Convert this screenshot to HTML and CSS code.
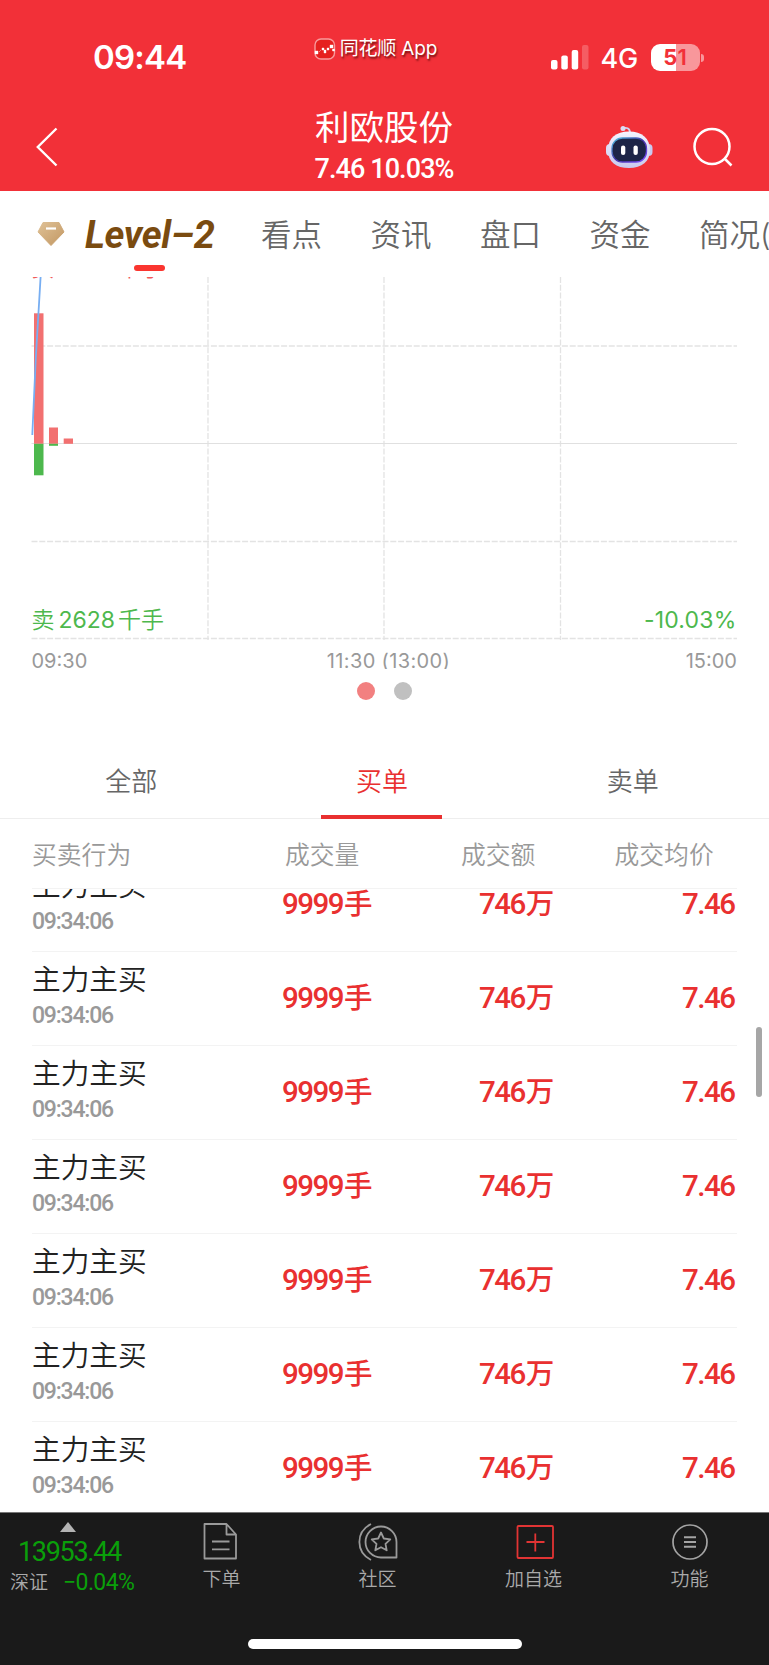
FILE: index.html
```
<!DOCTYPE html>
<html lang="zh-CN">
<head>
  <meta charset="UTF-8">
  <title>利欧股份</title>
  <link rel="stylesheet" href="styles.css">
</head>
<body>
  <header class="header">
    <div class="status">
      <span class="clock">09:44</span>
      <div class="app-mark">
        <svg width="22" height="22" viewBox="0 0 22 22">
          <rect x="1" y="1" width="19.5" height="20" rx="6" fill="#e6201f" stroke="#f89a9c" stroke-width="1.4"/>
          <path d="M1 13h3v3H1zM5 14l2-2M8 10h2v2H8zM10 12h2v3h-2zM13 10h2v2h-2zM16 7h3v3h-3zM18.500 11h2v2h-2z" fill="#fff" stroke="#fff" stroke-width=".4"/>
        </svg>
        <span>同花顺 App</span>
      </div>
      <div class="phone">
        <svg class="signal" width="38" height="25" viewBox="0 0 38 25" fill="#fff">
          <rect x="0" y="15" width="6.500" height="9.500" rx="2"/>
          <rect x="10.300" y="10.500" width="6.500" height="14" rx="2"/>
          <rect x="20.700" y="5" width="6.500" height="19.500" rx="2"/>
          <rect x="31" y="0" width="6.500" height="24.500" rx="2" opacity=".22"/>
        </svg>
        <span class="network">4G</span>
        <div class="battery">5<b>1</b></div>
        <i class="nub"></i>
      </div>
    </div>
    <div class="nav">
      <svg class="back" width="22" height="40" viewBox="0 0 22 40" fill="none" stroke="#fff" stroke-width="2.400">
        <path d="M20.500 1.500L1.800 20l18.700 18.500"/>
      </svg>
      <div class="stock">
        <h1>利欧股份</h1>
        <p class="quote">7.46 10.03%</p>
      </div>
      <div class="tools">
        <svg width="48" height="44" viewBox="0 0 48 44">
          <defs>
            <linearGradient id="shell" x1="0" y1="0" x2="0" y2="1">
              <stop offset="0" stop-color="#f4f3ff"/>
              <stop offset="1" stop-color="#c9c9ee"/>
            </linearGradient>
            <linearGradient id="glow" x1="0" y1="0" x2="1" y2="1">
              <stop offset="0" stop-color="#4fc3e0"/>
              <stop offset=".5" stop-color="#4434a8"/>
              <stop offset="1" stop-color="#7a4cff"/>
            </linearGradient>
          </defs>
          <path d="M17.500 3.500C21 2 25 3 25 8" fill="none" stroke="#d3d3f2" stroke-width="1.800"/>
          <circle cx="18" cy="3.500" r="2.500" fill="#dcdcf6"/>
          <rect x="1" y="19" width="8" height="12" rx="4" fill="#dcdcf6"/>
          <rect x="39.500" y="19" width="8" height="12" rx="4" fill="#c9caf0"/>
          <path d="M24 6.500c13 0 21 7 21 18.500S37 43 24 43 3 37 3 25 11 6.500 24 6.500z" fill="url(#shell)"/>
          <rect x="7" y="13" width="34.500" height="24" rx="10.500" fill="#1d2547" stroke="url(#glow)" stroke-width="1.300"/>
          <rect x="16" y="20.500" width="4.300" height="9.500" rx="2.100" fill="#fff"/>
          <rect x="28.500" y="20.500" width="4.300" height="9.500" rx="2.100" fill="#fff"/>
        </svg>
        <svg width="40" height="40" viewBox="0 0 40 40" fill="none" stroke="#fff" stroke-width="2.500">
          <circle cx="19" cy="19.500" r="17.500"/>
          <path d="M31.500 31.500l7 7"/>
        </svg>
      </div>
    </div>
  </header>

  <nav class="tabs">
    <svg class="gem" width="28" height="24" viewBox="0 0 28 24">
      <defs>
        <linearGradient id="gold" x1="0" y1="0" x2="1" y2="1">
          <stop offset="0" stop-color="#dfc196"/>
          <stop offset="1" stop-color="#c29762"/>
        </linearGradient>
      </defs>
      <path d="M6 0.500h16l5 9.500-13 13.500L1 10z" fill="url(#gold)" stroke="url(#gold)" stroke-linejoin="round"/>
      <path d="M9 6.500h10" stroke="#fff" stroke-width="2.200"/>
    </svg>
    <span class="level">Level–2</span>
    <span>看点</span>
    <span>资讯</span>
    <span>盘口</span>
    <span>资金</span>
    <span>简况(</span>
  </nav>

  <section class="chart">
    <svg width="769" height="364" viewBox="0 277 769 364">
      <g stroke="#e3e3e3" stroke-width="1.300" stroke-dasharray="6 1.800" fill="none">
        <path d="M208 277V640M384 277V640M560.500 277V640"/>
        <path d="M31.500 346H737M31.500 541.500H737"/>
        <path d="M31.500 638.500H737"/>
      </g>
      <path d="M31.500 443.500H737" stroke="#e0e0e0" stroke-width="1"/>
      <g fill="#f27070">
        <rect x="34" y="313.300" width="9.500" height="130.500"/>
        <rect x="49" y="427.500" width="9" height="16.300"/>
        <rect x="63.700" y="438.500" width="9.300" height="5.300"/>
      </g>
      <g fill="#4db84d">
        <rect x="34" y="443.800" width="9.500" height="31.500"/>
        <rect x="49" y="443.800" width="9" height="2"/>
      </g>
      <path d="M32.300 435L35.800 358 40.600 277" fill="none" stroke="#77aef2" stroke-width="1.800"/>
    </svg>
    <span class="buy">买<b>2628</b>千手</span>
    <span class="sell">卖<b>2628</b>千手</span>
    <span class="drop">-10.03%</span>
  </section>
  <div class="axis">
    <span>09:30</span>
    <span class="noon">11:30 (13:00)</span>
    <span>15:00</span>
  </div>
  <div class="dots"><i class="on"></i><i></i></div>

  <div class="filter">
    <span>全部</span>
    <span class="active">买单</span>
    <span>卖单</span>
  </div>

  <div class="head">
    <span>买卖行为</span>
    <span>成交量</span>
    <span>成交额</span>
    <span>成交均价</span>
  </div>
  <div class="list">
    <div class="rows" id="rows"></div>
    <i class="scrollbar"></i>
  </div>

  <footer class="footer">
    <div class="menu">
      <div class="index">
        <i class="up"></i>
        <span class="points">13953.44</span>
        <div class="change"><span>深证</span><span class="pct">−0.04%</span></div>
      </div>
      <div class="item">
        <svg width="40" height="40" viewBox="0 0 40 40" fill="none" stroke="#9a9a9a" stroke-width="1.800" stroke-linejoin="round">
          <path d="M2.500 2h22l9.500 10.500v24H2.500zM24.500 2v10.500H34M10 19.500h17.500M10 27.300h17.500"/>
        </svg>
        <span>下单</span>
      </div>
      <div class="item">
        <svg width="40" height="40" viewBox="0 0 40 40" fill="none" stroke="#9a9a9a" stroke-width="1.800" stroke-linejoin="round">
          <path d="M23 4.500a15.500 15.500 0 0 1 15.500 15.500v15.500H23a15.500 15.500 0 0 1 0-31z"/>
          <path d="M13 2C-2.500 10-2.500 30 13 38"/>
          <path d="M23 10.500l2.800 6 6.500.8-4.800 4.500 1.200 6.500-5.700-3.100-5.700 3.100 1.200-6.500-4.800-4.500 6.500-.8z"/>
        </svg>
        <span>社区</span>
      </div>
      <div class="item">
        <svg width="40" height="40" viewBox="0 0 40 40" fill="none" stroke="#e23434" stroke-width="1.800">
          <rect x="3.500" y="4" width="35.500" height="32" rx="1"/>
          <path d="M12.500 20h18M21.300 11.500v18"/>
        </svg>
        <span>加自选</span>
      </div>
      <div class="item">
        <svg width="40" height="40" viewBox="0 0 40 40" fill="none" stroke="#a4a4a4" stroke-width="1.700">
          <circle cx="20" cy="20" r="17"/>
          <path d="M14 15.200h12M14 20h12M14 24.800h12" stroke-width="2"/>
        </svg>
        <span>功能</span>
      </div>
    </div>
    <i class="home"></i>
  </footer>

  <script>
    const orders = [];
    for (let i = 0; i < 7; i++) {
      orders.push({ type: "主力主买", time: "09:34:06", volume: 9999, amount: 746, price: "7.46" });
    }

    document.getElementById("rows").innerHTML = orders.map(order => `
      <div class="row">
        <div class="act"><span class="type">${order.type}</span><span class="time">${order.time}</span></div>
        <span class="num volume">${order.volume}<em>手</em></span>
        <span class="num amount">${order.amount}<em>万</em></span>
        <span class="num price">${order.price}</span>
      </div>`).join("");
  </script>
</body>
</html>
```
FILE: styles.css
```
* {
  box-sizing: border-box;
}

body {
  margin: 0;
  width: 769px;
  height: 1665px;
  overflow: hidden;
  display: flex;
  flex-direction: column;
  background: #fff;
  color: #666;
  font-family: Inter, "Noto Sans CJK SC", sans-serif;
  font-weight: 350;
}

span, h1, p {
  white-space: nowrap;
}

svg {
  display: block;
  flex: none;
}

.header {
  flex: none;
  height: 190.700px;
  background: #f23038;
  color: #fff;
}

.status {
  height: 100px;
  padding: 37px 65px 0 93px;
  display: flex;
  align-items: flex-start;
}

.clock {
  width: 221px;
  font-size: 33px;
  font-weight: 600;
  line-height: 41px;
  letter-spacing: -0.8px;
}

.app-mark {
  display: flex;
  align-items: center;
  gap: 4px;
  width: 237px;
  height: 24px;
  font-size: 19px;
  font-weight: 400;
  line-height: 24px;
  letter-spacing: -0.2px;
  text-shadow: 1px 2px 2px rgba(60, 0, 0, 0.7);
}

.phone {
  display: flex;
  align-items: center;
  height: 41px;
}

.network {
  margin-left: 12px;
  width: 50px;
  font-size: 27px;
  font-weight: 500;
  line-height: 41px;
  padding-top: 2px;
  letter-spacing: -0.3px;
}

.battery {
  width: 49px;
  height: 27px;
  border-radius: 9px;
  background: linear-gradient(90deg, #fff 51%, #f8979b 51%);
  color: #f23038;
  font-size: 22px;
  font-weight: 700;
  line-height: 27px;
  text-align: center;
}

.battery b {
  font-weight: 600;
}

.nub {
  width: 3px;
  height: 8px;
  margin-left: 1.500px;
  border-radius: 0 4px 4px 0;
  background: #f8979b;
}

.nav {
  height: 90px;
  padding: 0 36px;
  display: grid;
  grid-template-columns: 1fr 150px 1fr;
  align-items: start;
}

.back {
  margin-top: 27px;
}

.stock {
  margin-left: -1px;
  text-align: center;
}

.stock h1 {
  margin: 4.500px 0 0;
  font-size: 34.500px;
  font-weight: 400;
  line-height: 46px;
}

.quote {
  margin: 4px 0 0;
  font-family: Roboto, sans-serif;
  font-size: 27px;
  font-weight: 500;
  line-height: 28px;
  letter-spacing: -0.9px;
}

.tools {
  display: flex;
  justify-content: flex-end;
  align-items: center;
  gap: 40px;
  padding-top: 25px;
}

.tabs {
  flex: none;
  height: 86.300px;
  padding-left: 37px;
  display: flex;
  overflow: hidden;
  font-size: 30.500px;
  line-height: 88px;
}

.tabs span {
  margin-right: 48.500px;
}

.tabs .gem {
  margin: 31px 20px 0 0;
}

.tabs .level {
  position: relative;
  width: 127.500px;
  color: #7a4b10;
  font-family: Roboto, sans-serif;
  font-size: 38px;
  font-style: italic;
  font-weight: 700;
  letter-spacing: -0.4px;
}

.level::after {
  content: "";
  position: absolute;
  left: 49px;
  top: 74px;
  width: 31px;
  height: 6px;
  border-radius: 3px;
  background: #fa352f;
}

.chart {
  flex: none;
  position: relative;
  height: 364px;
  overflow: hidden;
  font-size: 23px;
}

/* labels drawn over the plot corners */
.buy, .sell, .drop {
  position: absolute;
  left: 31.500px;
  bottom: 5px;
  color: #4db84d;
  line-height: 32px;
}

.buy b, .sell b {
  margin: 0 3px 0 4px;
  font-weight: 400;
}

.buy {
  top: -25px;
  bottom: auto;
  color: #f05a5a;
}

.drop {
  left: auto;
  right: 32.500px;
  font-weight: 400;
  letter-spacing: 0.2px;
}

.axis {
  flex: none;
  height: 28px;
  padding: 8px 32px 0 31.500px;
  display: flex;
  justify-content: space-between;
  overflow: hidden;
  color: #999;
  font-size: 20px;
  font-weight: 380;
  line-height: 25px;
}

.noon {
  margin-left: 4px;
  letter-spacing: 0.350px;
}

.dots {
  display: flex;
  flex: none;
  justify-content: center;
  gap: 19px;
  height: 68px;
  padding-top: 13px;
}

.dots i {
  width: 18px;
  height: 18px;
  border-radius: 50%;
  background: #c0c0c0;
}

.dots .on {
  background: #f28080;
}

.filter {
  flex: none;
  height: 82px;
  padding: 0 11px 0 6px;
  display: grid;
  grid-template-columns: repeat(3, 1fr);
  justify-items: center;
  border-bottom: 1px solid #eee;
  font-size: 26px;
  line-height: 89px;
}

.filter .active {
  width: 121px;
  height: 82px;
  border-bottom: 4px solid #e93030;
  color: #e93030;
  text-align: center;
}

.head {
  flex: none;
  height: 70px;
  margin: 0 32px;
  display: grid;
  grid-template-columns: 253px 176px 153.500px 1fr;
  border-bottom: 1px solid #f3f3f3;
  color: #999;
  font-size: 24.800px;
  line-height: 72px;
}

.list {
  position: relative;
  flex: 1;
  display: flex;
  flex-direction: column;
  justify-content: flex-end;
  overflow: hidden;
}

.rows {
  margin-bottom: -3.500px;
}

.row {
  height: 93.900px;
  margin: 0 32px;
  display: grid;
  grid-template-columns: 250px 197px 1fr auto;
  border-bottom: 1px solid #f3f3f3;
}

.act {
  display: flex;
  flex-direction: column;
  padding-top: 7px;
}

.type {
  color: #222;
  font-size: 28.700px;
  line-height: 41px;
}

.time {
  color: #999;
  font-family: Roboto, sans-serif;
  font-size: 23px;
  font-weight: 500;
  line-height: 32px;
  letter-spacing: -1.2px;
}

.num {
  color: #e93030;
  font-family: Roboto, "Noto Sans CJK SC", sans-serif;
  font-size: 29.500px;
  font-weight: 500;
  line-height: 93px;
  letter-spacing: -1.5px;
}

.num em {
  margin-left: 1px;
  font-size: 28.500px;
  font-style: normal;
}

.price {
  margin-right: 2.500px;
}

.scrollbar {
  position: absolute;
  right: 7px;
  top: 138px;
  width: 6px;
  height: 70px;
  border-radius: 3px;
  background: #a6a6a6;
}

.footer {
  flex: none;
  height: 153px;
  border-top: 1px solid #777;
  background: #1a1a1a;
  color: #aaa;
  font-size: 19px;
}

.menu {
  height: 126px;
  display: grid;
  grid-template-columns: 143.500px repeat(4, 156px);
}

.index {
  display: flex;
  flex-direction: column;
  padding: 9px 0 0 10px;
}

.up {
  margin-left: 50px;
  border: 8.500px solid transparent;
  border-top: 0;
  border-bottom: 10px solid #b4b4b4;
  width: 0;
}

.points, .pct {
  color: #0a9f0a;
  font-family: Roboto, sans-serif;
  font-weight: 450;
}

.points {
  margin: 4px 0 0 8px;
  font-size: 27px;
  line-height: 32px;
  letter-spacing: -1.3px;
}

.change {
  display: flex;
  gap: 15px;
  line-height: 30px;
}

.pct {
  font-size: 23px;
  letter-spacing: -0.6px;
}

.item {
  display: flex;
  flex-direction: column;
  align-items: center;
  padding-top: 9px;
  line-height: 36px;
}

.home {
  display: block;
  width: 274px;
  height: 10px;
  margin: 0 auto;
  border-radius: 5px;
  background: #fff;
}
```
